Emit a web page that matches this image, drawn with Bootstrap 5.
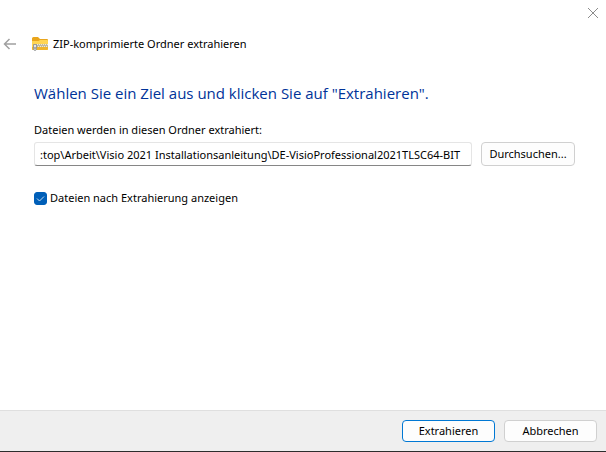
<!DOCTYPE html>
<html lang="de">
<head>
<meta charset="utf-8">
<meta name="viewport" content="width=device-width, initial-scale=1">
<title>ZIP-komprimierte Ordner extrahieren</title>
<link href="https://cdn.jsdelivr.net/npm/bootstrap@5.3.0/dist/css/bootstrap.min.css" rel="stylesheet">
<style>
  body { font-family: "Noto Sans", "Open Sans", sans-serif; font-size: 11px; line-height: 16px; color: #000; background: #fff; }
  .dialog { border-bottom: 1px solid #2d2d2d; }
  .title-row { height: 24px; padding-left: 3px; margin-top: 5px; }
  .icon-btn { line-height: 0; color: #9b9b9b; }
  .close-row { height: 27px; padding-right: 7px; }
  .folder { margin: 0 4px 0 15px; }
  .wizard { padding: 26px 31px 0 34px; }
  .wizard h1 { font-family: "Open Sans", "Noto Sans", sans-serif; font-size: 15px; line-height: 22px; color: #039; margin-bottom: 18px; }
  .path-row { gap: 9px; margin-top: 4px; }
  .path-row .form-control { height: 24px; padding: 0 5px; font-size: 11px; color: #000; border: 1px solid #e5e5e5; border-bottom-color: #868686; border-radius: 3px; min-width: 0; }
  .dlg-btn { width: 94px; height: 24px; padding: 0; font-size: 11px; line-height: 16px; color: #000; background: #fdfdfd; border: 1px solid #d0d0d0; border-radius: 4px; flex: none; }
  .dlg-btn.primary { border-color: #0078d4; }
  .show-row { margin-top: 24px; gap: 3px; }
  .show-row .form-check-input { width: 13px; height: 13px; margin: 0; border-radius: 3px; }
  .show-row .form-check-input:checked { background-color: #005fb8; border-color: #005fb8; background-size: 9px 9px; background-image: url("data:image/svg+xml,%3csvg xmlns='http://www.w3.org/2000/svg' viewBox='0 0 9 9'%3e%3cpath d='M1 4.500l2.500 2.500L8 2.500' fill='none' stroke='%23c5dcf0'/%3e%3c/svg%3e"); }
  .footer-bar { background: #efefef; border-top: 1px solid #dfdfdf; padding: 9px 9px; gap: 9px; }
  .footer-bar .dlg-btn { width: 93px; height: 22px; }
</style>
</head>
<body>
<main class="dialog d-flex flex-column vh-100">
  <div class="close-row d-flex justify-content-end align-items-end">
    <button type="button" class="icon-btn btn p-0 border-0 mb-2" aria-label="Schließen">
      <svg width="12" height="12" viewBox="0 0 12 12" fill="none" stroke="#8c8c8c"><path d="M1 1l10 10M11 1L1 11"/></svg>
    </button>
  </div>
  <header class="title-row d-flex align-items-center">
    <button type="button" class="icon-btn btn p-0 border-0" aria-label="Zurück">
      <svg width="14" height="12" viewBox="0 0 14 12" fill="none" stroke="#a0a0a0" stroke-width="1.5"><path d="M13 6H1.500M6.500 1L1.500 6l5 5"/></svg>
    </button>
    <svg class="folder" width="17" height="16" viewBox="0 0 17 16" aria-hidden="true">
      <path d="M0 2.500Q0 1 1.500 1H6l2 2h7Q16 3 16 4v4H0z" fill="#e9a51c"/>
      <path d="M0 5h6.500L8 4h7q1 0 1 1v8q0 1-1 1H1q-1 0-1-1z" fill="#ffd553"/>
      <path d="M0 11h16v2q0 1-1 1H1q-1 0-1-1z" fill="#efb42c"/>
      <path d="M3 8h13v3H3z" fill="#f1ead2"/>
      <path d="M4 9h12" stroke="#8b866f" stroke-dasharray="1 1"/>
      <path d="M5 10h11" stroke="#8b866f" stroke-dasharray="1 1"/>
      <path d="M1.500 8.500h3v4q0 2-1.500 2t-1.500-2z" fill="#e6e6e6" stroke="#87898c" stroke-width=".8"/>
      <path d="M3 11v2" stroke="#707070"/>
    </svg>
    <span>ZIP-komprimierte Ordner extrahieren</span>
  </header>
  <section class="wizard flex-grow-1">
    <h1 class="fw-normal">Wählen Sie ein Ziel aus und klicken Sie auf "Extrahieren".</h1>
    <label for="target" class="d-block">Dateien werden in diesen Ordner extrahiert:</label>
    <div class="path-row d-flex">
      <input id="target" type="text" class="form-control flex-grow-1" value=":top\Arbeit\Visio 2021 Installationsanleitung\DE-VisioProfessional2021TLSC64-BIT">
      <button type="button" class="btn dlg-btn">Durchsuchen...</button>
    </div>
    <div class="show-row d-flex align-items-center">
      <input id="show" type="checkbox" class="form-check-input" checked>
      <label for="show">Dateien nach Extrahierung anzeigen</label>
    </div>
  </section>
  <footer class="footer-bar d-flex justify-content-end">
    <button type="submit" class="btn dlg-btn primary">Extrahieren</button>
    <button type="button" class="btn dlg-btn">Abbrechen</button>
  </footer>
</main>
<script src="https://cdn.jsdelivr.net/npm/bootstrap@5.3.0/dist/js/bootstrap.bundle.min.js"></script>
</body>
</html>
